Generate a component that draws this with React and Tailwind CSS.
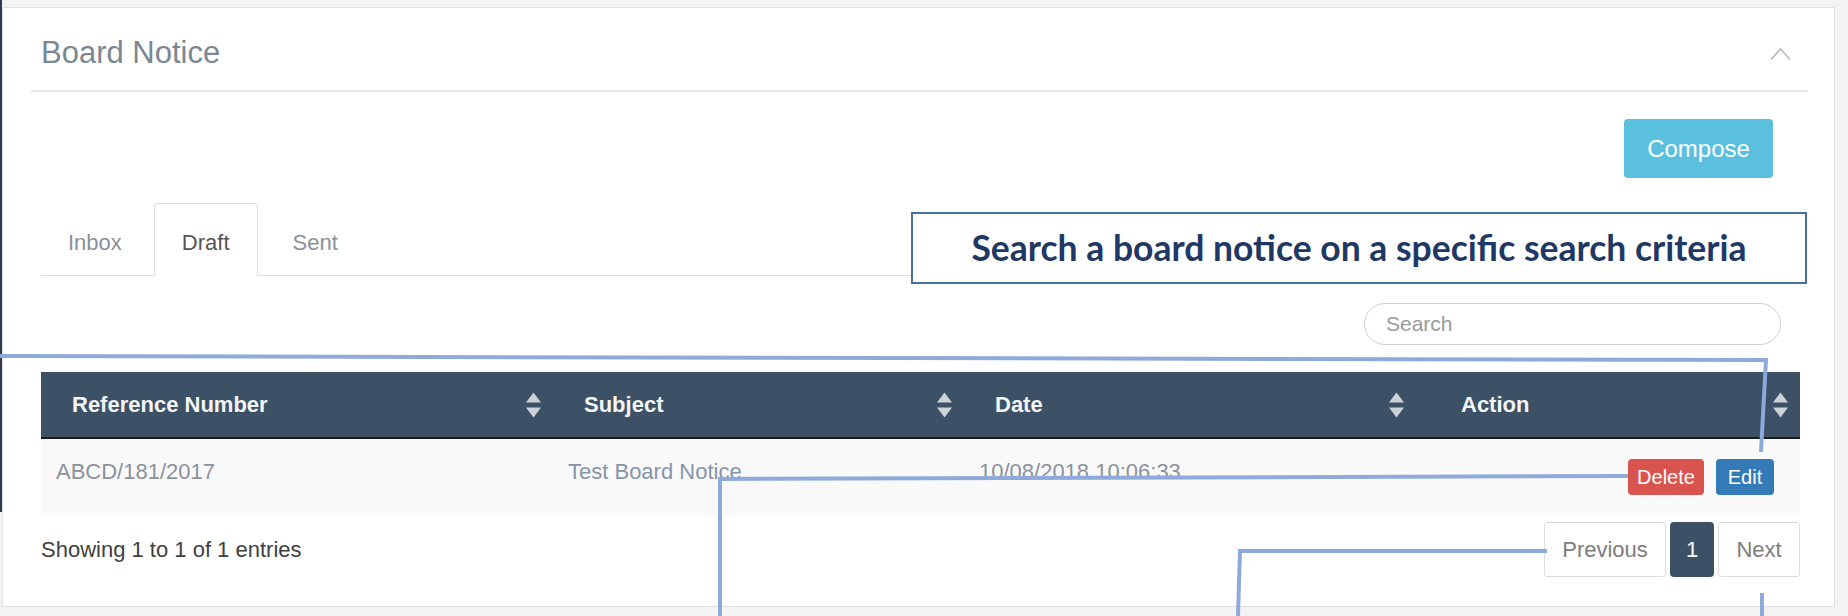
import React from "react";

const columns = [
  { label: "Reference Number", width: "w-[512px]", pad: "pl-[31px]" },
  { label: "Subject", width: "w-[411px]", pad: "pl-[31px]" },
  { label: "Date", width: "w-[452px]", pad: "pl-[31px]" },
  { label: "Action", width: "w-[384px]", pad: "pl-[45px]" },
];

function SortIcon() {
  return (
    <svg
      className="absolute right-[12px] top-1/2 -translate-y-1/2"
      width="15"
      height="25"
      viewBox="0 0 15 25"
    >
      <polygon points="7.5,0 15,10 0,10" fill="#cdd2d8" />
      <polygon points="0,15 15,15 7.5,25" fill="#cdd2d8" />
    </svg>
  );
}

function Tab({ label, active, pad }) {
  if (active) {
    return (
      <div className="-mb-px mr-[3px] flex h-[73px] items-center rounded-t-[4px] border border-[#ddd] border-b-white bg-white px-[27px] pt-[6px] text-[22px] text-[#555]">
        {label}
      </div>
    );
  }
  return (
    <div
      className={`-mb-px mr-[3px] flex h-[73px] items-center border border-transparent pr-[28px] pt-[6px] text-[22px] text-[#8a9099] ${pad}`}
    >
      {label}
    </div>
  );
}

export default function App() {
  return (
    <div className="relative h-[616px] w-[1848px] overflow-hidden bg-[#f3f3f3] pl-[2px] pt-[7px] font-['Liberation_Sans',Arial,sans-serif]">
      {/* Panel */}
      <div className="h-[600px] w-[1833px] border border-[#e2e2e2] bg-white">
        {/* Panel header */}
        <div className="ml-[28px] mr-[26px] flex items-center justify-between border-b-2 border-[#e4e7eb] pb-[20px] pl-[10px] pr-[17px] pt-[28px]">
          <h2 className="text-[31px] leading-[34px] text-[#7b8794]">Board Notice</h2>
          <svg width="21" height="14" viewBox="0 0 21 14" className="mt-[2px]">
            <polyline points="1,12.5 10.5,2 20,12.5" fill="none" stroke="#bdbdbd" strokeWidth="1.8" />
          </svg>
        </div>

        <div className="ml-[38px] mr-[34px]">
          {/* Compose */}
          <div className="mt-[27px] flex justify-end pr-[27px]">
            <button className="h-[59px] w-[149px] rounded-[4px] bg-[#5bc0de] text-[24px] text-white">
              Compose
            </button>
          </div>

          {/* Tabs */}
          <div className="mt-[25px] flex border-b border-[#ddd]">
            <Tab label="Inbox" pad="pl-[26px]" />
            <Tab label="Draft" active />
            <Tab label="Sent" pad="pl-[31px]" />
          </div>

          {/* Search */}
          <div className="mt-[27px] flex justify-end pr-[19px]">
            <input
              placeholder="Search"
              className="h-[42px] w-[417px] rounded-full border border-[#cfcfcf] px-[21px] text-[21px] outline-none placeholder:text-[#9a9a9a]"
            />
          </div>

          {/* Table */}
          <table className="mt-[27px] w-full table-fixed border-collapse">
            <thead>
              <tr className="bg-[#3d5166]">
                {columns.map((c) => (
                  <th
                    key={c.label}
                    className={`${c.width} ${c.pad} relative h-[66px] border-b-2 border-[#1c1c1c] text-left text-[22px] font-bold text-[#f4f6f8]`}
                  >
                    {c.label}
                    <SortIcon />
                  </th>
                ))}
              </tr>
            </thead>
            <tbody>
              <tr className="bg-[#f9f9f9]">
                <td className="h-[77px] pl-[15px] pt-[20px] align-top text-[22px] leading-[25px] text-[#8c9299]">
                  ABCD/181/2017
                </td>
                <td className="h-[77px] pl-[15px] pt-[20px] align-top text-[22px] leading-[25px] text-[#8795a8]">
                  Test Board Notice
                </td>
                <td className="h-[77px] pl-[15px] pt-[20px] align-top text-[22px] leading-[25px] text-[#8c9299]">
                  10/08/2018 10:06:33
                </td>
                <td className="h-[77px] pr-[26px]">
                  <div className="flex justify-end gap-[12px]">
                    <button className="h-[36px] w-[76px] rounded-[4px] bg-[#d9534f] text-[20px] text-white">
                      Delete
                    </button>
                    <button className="h-[36px] w-[58px] rounded-[4px] bg-[#337ab7] text-[20px] text-white">
                      Edit
                    </button>
                  </div>
                </td>
              </tr>
            </tbody>
          </table>

          {/* Footer */}
          <div className="mt-[7px] flex items-center justify-between">
            <div className="text-[22px] text-[#3f3f3f]">Showing 1 to 1 of 1 entries</div>
            <div className="flex gap-[4px] text-[22px]">
              <div className="flex h-[55px] w-[122px] items-center justify-center rounded-[3px] border border-[#ddd] text-[#7d7d7d]">
                Previous
              </div>
              <div className="flex h-[55px] w-[44px] items-center justify-center rounded-[4px] bg-[#3d5166] text-white">
                1
              </div>
              <div className="flex h-[55px] w-[82px] items-center justify-center rounded-[3px] border border-[#ddd] text-[#7d7d7d]">
                Next
              </div>
            </div>
          </div>
        </div>
      </div>

      {/* Slide frame edge */}
      <div className="absolute left-0 top-0 h-[512px] w-[2px] bg-[#2f3b4c]" />

      {/* Callout box */}
      <div className="absolute left-[911px] top-[212px] flex h-[72px] w-[896px] items-center justify-center border-2 border-[#41719c] bg-white font-['Lato',sans-serif] text-[35.5px] font-bold text-[#1f3864]">
        Search a board notice on a specific search criteria
      </div>

      {/* Callout lines */}
      <svg className="pointer-events-none absolute left-0 top-0" width="1848" height="616">
        <g fill="none" stroke="#8eaadb" strokeWidth="4">
          <polyline points="0,356 1766,360 1761,452" />
          <polyline points="1628,476 720,479 720,616" />
          <polyline points="1547,551 1240,551 1238,616" />
          <polyline points="1762,593 1762,616" />
        </g>
      </svg>
    </div>
  );
}
